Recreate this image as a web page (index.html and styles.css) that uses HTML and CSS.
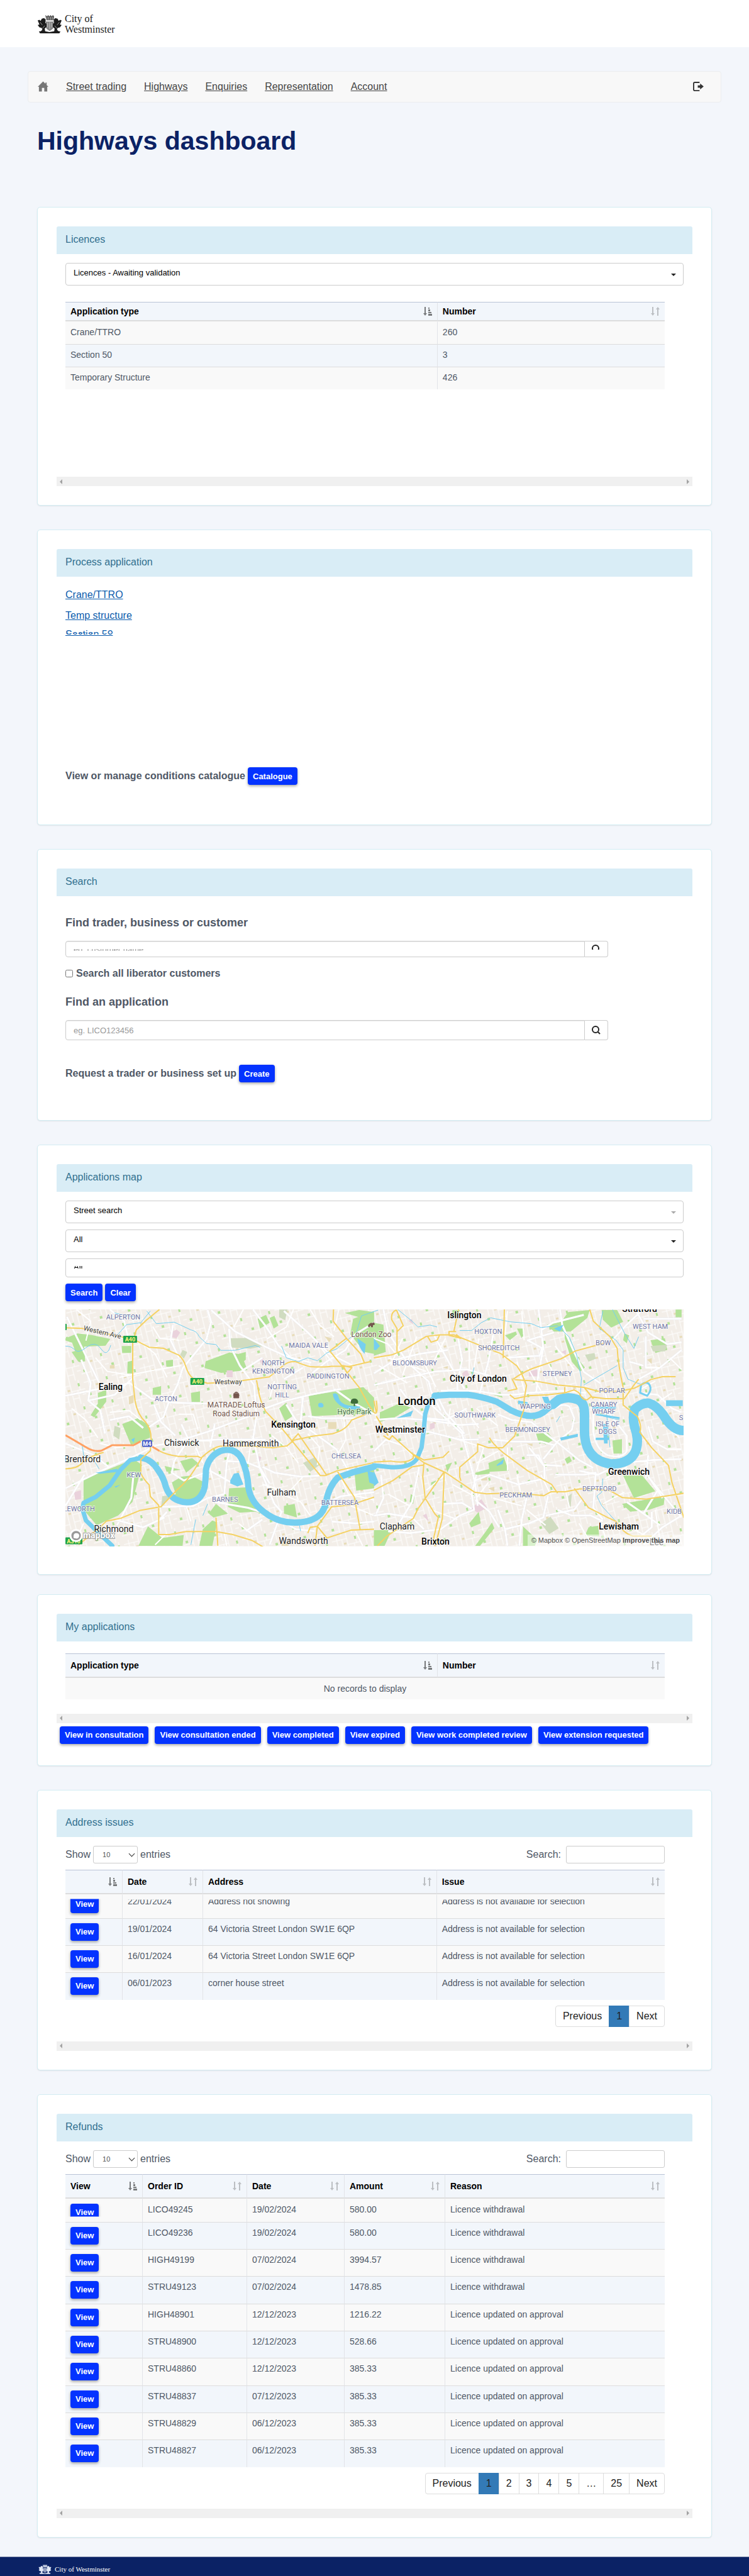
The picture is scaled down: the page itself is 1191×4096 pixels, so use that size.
FILE: index.html
```html
<!DOCTYPE html>
<html lang="en">
<head>
<meta charset="utf-8">
<meta name="viewport" content="width=device-width, initial-scale=1">
<title>Highways dashboard</title>
<link rel="stylesheet" href="styles.css">
</head>
<body>
<svg class="sprite" aria-hidden="true">
  <symbol id="crest" viewBox="0 0 43 32">
    <path d="M14 1l3 2 2-2 2 2 2-2 2 2 2-2 2 2-1 7H16z" opacity=".75"/>
    <path d="M1 10l3-1 2 2 2-4 4-1 3 3-1 5 2 2v5l-3 3 1 6H5l4-4-1-3-4-1-3-4 3-1z"/>
    <path d="M42 10l-3-1-2 2-2-4-4-1-3 3 1 5-2 2v5l3 3-1 6h9l-4-4 1-3 4-1 3-4-3-1z"/>
    <path d="M15 12h13v9c0 3-3 5-6.500 7-3.500-2-6.500-4-6.500-7z" opacity=".55"/>
    <path d="M3 29l8-1 10 2 11-2 8 1-2 3H5z"/>
    <path class="crest-cut" d="M17 4v5M20 4v5M23 4v5M26 4v5M14 10h15M18 14v8M21.500 13v12M25 14v8M5 13l4 5M38 13l-4 5M9 24l4-5M34 24l-4-5"/>
  </symbol>
  <symbol id="home" viewBox="0 0 18 17"><path d="M9 0L0 9h2v8h5v-6h4v6h5V9h2l-3-3V2h-2v2z"/></symbol>
  <symbol id="logout" viewBox="0 0 19 16"><path d="M12 0H4Q1 0 1 3v10q0 3 3 3h8v-2H4q-1 0-1-1V3q0-1 1-1h8zM9 6h4V3l6 5-6 5v-3H9z"/></symbol>
  <symbol id="glass" viewBox="0 0 14 14"><path class="line" d="M9.500 9.500L13 13M6 1a5 5 0 1 0 0 10a5 5 0 1 0 0-10z"/></symbol>
  <symbol id="sorted" viewBox="0 0 14 14"><path d="M2 0h2v10h2l-3 4-3-4h2zM8 1h2v2H8zM8 4h3v3H8zM8 8h5v2H8zM8 11h6v3H8z"/></symbol>
  <symbol id="sortable" viewBox="0 0 14 14"><path d="M2 0h2v10h2l-3 4-3-4h2zM10 14h2V4h2l-3-4-3 4h2z"/></symbol>
</svg>

<header class="site-header">
  <a class="brand" href="#">
    <svg class="brand-crest"><use href="#crest"/></svg>
    <span>City of<br>Westminster</span>
  </a>
</header>

<nav class="navbar" aria-label="Main">
  <a href="#" aria-label="Home"><svg class="icon-home"><use href="#home"/></svg></a>
  <a href="#">Street trading</a>
  <a href="#">Highways</a>
  <a href="#">Enquiries</a>
  <a href="#">Representation</a>
  <a href="#">Account</a>
  <a class="logout" href="#" aria-label="Log out"><svg class="icon-logout"><use href="#logout"/></svg></a>
</nav>

<main>
  <h1>Highways dashboard</h1>

  <section class="card">
    <h2>Licences</h2>
    <div class="pane pane-licences">
      <div class="select-box select-licences">
        <select aria-label="Licence status"><option>Licences - Awaiting validation</option></select>
      </div>
      <table class="data-table head-short">
        <colgroup><col class="w-type"><col></colgroup>
        <thead><tr>
          <th><div>Application type<svg class="on"><use href="#sorted"/></svg></div></th>
          <th><div>Number<svg><use href="#sortable"/></svg></div></th>
        </tr></thead>
        <tbody>
          <tr><td>Crane/TTRO</td><td>260</td></tr>
          <tr><td>Section 50</td><td>3</td></tr>
          <tr><td>Temporary Structure</td><td>426</td></tr>
        </tbody>
      </table>
    </div>
    <div class="scrollbar"></div>
  </section>

  <section class="card card-process">
    <h2>Process application</h2>
    <div class="body">
      <ul class="link-list">
        <li><a href="#">Crane/TTRO</a></li>
        <li><a href="#">Temp structure</a></li>
        <li><a class="cut-link" href="#" data-label="Section 50"><span>Section 50</span></a></li>
      </ul>
      <div class="action-line"><strong>View or manage conditions catalogue</strong> <button type="button" class="btn">Catalogue</button></div>
    </div>
  </section>

  <section class="card card-search">
    <h2>Search</h2>
    <form class="body">
      <label class="title" for="trader">Find trader, business or customer</label>
      <div class="input-group short">
        <input id="trader" type="text" placeholder="eg. customer name">
        <button type="button" aria-label="Find trader"><svg><use href="#glass"/></svg></button>
      </div>
      <label class="check"><input type="checkbox">Search all liberator customers</label>
      <label class="title" for="application">Find an application</label>
      <div class="input-group">
        <input id="application" type="text" placeholder="eg. LICO123456">
        <button type="button" aria-label="Find application"><svg><use href="#glass"/></svg></button>
      </div>
      <div class="action-line"><strong>Request a trader or business set up</strong> <button type="button" class="btn">Create</button></div>
    </form>
  </section>

  <section class="card card-map">
    <h2>Applications map</h2>
    <div class="body">
      <div class="select-stack">
        <div class="select-box faint"><select aria-label="Search type"><option>Street search</option></select></div>
        <div class="select-box"><select aria-label="Street"><option>All</option></select></div>
        <div class="select-box short"><select aria-label="Status"><option>All</option></select></div>
      </div>
      <div class="button-pair"><button type="button" class="btn">Search</button><button type="button" class="btn">Clear</button></div>
      <div class="map">
        <svg class="map-canvas" viewBox="0 0 984 377" role="img" aria-label="Map of London">
          <defs>
            <pattern id="streets" width="46" height="38" patternUnits="userSpaceOnUse" patternTransform="rotate(-14)">
              <path class="tiny" d="M0 6h24M8 0v22M16 6v32M24 0v38M24 16h22M34 16v22M0 30h16M38 0v16M24 28h10M40 24h6"/>
              <path class="grass" d="M4 24h4v4h-4zM36 5h3v5h-3z"/>
              <path class="sand" d="M18 12h4v3h-4z"/>
            </pattern>
          </defs>
          <rect class="land" width="984" height="377"/>
          <rect fill="url(#streets)" width="984" height="377"/>

          <g transform="matrix(.3797 0 0 .3101 -104 -16)">
            <path class="grass" d="M274 200l50-25 60 8 78 20-20 35-90 5 5 75-25 5-30-100-28-12zM862 318l100-45 50 10 25 80-110 15-70-25zM1000 280l30-10v40l-20 20zM512 640l65-30 52 40v60l-80 38zM1293 495l230-45 45 55v80l-260 15zM350 925l210-105 35 30-40 190-60 70-90 50-55-80zM720 940l40-30 40-5 50 30-15 70-40 35-50-10zM960 970l70-5 30 60 65 75-60-10-60 5-50-30zM850 1180l40-45 20 10-20 120h-55zM580 1265l40-100 60 60 90-15-5 55zM875 1100l30-50 50 50-60 20zM1480 100l88-40v220l-40-10-60-90zM1485 880l83-20v110l-75 12zM1445 70l60-15 63 10-40 35zM1080 100l35-20 15 40-40 30zM1130 95l20-10 17 50-20 15zM1170 560l30-30 25 70-30 25zM1190 1060l45-10 10 70-55-20zM755 830l50-15 25 25-50 50zM410 480l35-15v60l-50 80-15-10 30-60zM300 270l30-10 18 50-20 10zM695 315l30-5v40l-28-5zM510 240h40v35h-38zM535 320l20-5v65h-22zM640 455l35-10v45h-35zM800 480l38-8v55h-35zM690 855l8 30 60-10z"/>
            <path class="scrub" d="M965 200l80-2 65 40-60 15-80-5zM1170 52h35l-10 55-25-15zM480 650l25 10-5 60-25-20zM1270 840l50-30 20 40-40 35zM680 1010l40-5-45 65zM765 260l20 10-15 35-15-20z"/>
            <path class="pink" d="M715 170l25-15 15 15-15 30-20-5zM950 365h25v35h-25zM310 990l30-10v45l-25 5zM1085 300l20 5-10 30zM1075 800l20 10-10 35z"/>
            <path class="sand" d="M1375 630h35v35h-35zM460 340l20-5v20h-20zM540 500l20-10v40l-20 10zM1360 190l30 10-10 20zM1180 1250l30-10v25h-30z"/>
            <path class="road" d="M274 495l140-35 130-30 90 80 90 20 130 5h80M460 52l60 60 22 110M725 130l-10 80 35 90M870 55l15 60-20 90-100 150-20 80-40 100-20 70-60 50M960 150l5 90 40 100 60 100 10 160-15 120M885 55l100 110 130 80 90 50 100 30M1190 60l100 110 90 110 100 60M1060 52l50 80 60 110 70 80M1100 300l-90 70M1110 560l90-40 100-30 130-30M274 740l120 60 60 60M274 970l150-90 130-70 100-60 100-20 160-10h200M274 1060l80-160M740 730l130-50 130-60 90-40M1060 700l30 170 60 180 30 40-50 170M1100 860l50 30 110 20 80-5M940 1000l-70 20-60 40-130 5M1568 120l-80 60-40 80-80 60-60 60M1200 540l40 80 70 60 100 90 50 110M560 890l-10 130-60 140M480 1130l120 40 90-50M670 1130l30-40M900 1040l140 30 100 40 100 70 80 10M1340 1060l90-50 138-20M1390 1140l100 10 78-10M820 760l30 80M760 640l30 80-60 110-10 60 50 40 110-50 90 60M340 310l40 120-10 90 50 50 20 120M420 440l-40-100-40-100-60-150M560 400l-80 90-110 30M645 540l30 90 60 70M1400 460l80 70 88 60M1290 600l60 10h150M1030 1190l70-60M950 830l80 5 60 30 40 80M970 740l-20 100-10 160M1270 350l-80 60M1270 500l-10 130-90 50M900 640l-20 120M600 660l-60-60-80 20"/>
            <path class="lane" d="M320 52l60 60-20 100M400 300l50 70 100 20M500 400l160-40 100-20M590 220l60 60 50 120M640 140l30 60 80 10M300 560l60 60 50 90M460 580l80-10 50 50M420 740l70 20 70-10M750 590h60l20 80M870 820l20 100M1050 750l-10 90M1140 700l60 60 50 80M1290 690l50 70-10 90M1440 600l10 120-50 110M1300 52l40 80 60 60M1340 240l50 80M1420 52l-20 110M1230 52l-30 90-80 60M1020 52l-40 90M900 420l30 60M1150 420l-20 90M350 1150l-40 110M700 1200l-50 60M780 1060l20 80M1100 950l110 40 60-80M1180 1000l80 40 40 70M1470 1060l98 50M1230 960l20 70M1430 920l30 80 108 30M1490 1190l30 75M940 1200l10 65M1000 1150l60 60"/>
            <path class="stream" d="M274 240q25 0 40 20t50-15 60 10 40-20M480 200l50-70 60-10 40-60M615 60l40 65 75-8 70 40q25 5 35 35l30 35 40 5 20 30h60l85-25 20 10M1180 240l20 60 50 20 40-20 40 15 40-40 40-20 60-60 20-10 25-100 70-30M345 750l5 50 40 20 25 50M405 1180l60 80M1255 1160l5 30M850 1110l20-60M820 1130l-20 130M480 70l80 20"/>
            <path class="water" d="M1395 485q20-10 25 20t40 40l50 5-5 15q-50 5-80-20-30-30-30-60zM1335 535q15-10 20 5t-10 15-10-20zM965 930l15-35 20-5 20 60-25 10-30-15zM1498 200l35 30-5 50q-25-30-30-80zM1540 880l28 10v60l-20-10zM550 720l15-10-5 25zM480 960l25-8-20 15zM400 890l90-20 10 15-80 10z"/>
            <path class="river narrow" d="M470 1265l-60-70-50-60-15-60 5-30 50-30 60-60 45-80 40-50 45-10"/>
            <path class="river" d="M590 812q45 10 70 60 25 40 35 90 20 75 88 80 60 0 75-80 5-55 5-85 10-70 60-98 60-25 90 40 25 70 28 145 10 85 80 140 60 50 140 40 90-10 105-100 10-80 50-130l60-25 92-30"/>
            <path class="motorway" d="M274 697l90 65q30 22 60 15l45-28h90l30-20M638 756l30 22"/>
            <path class="main" d="M274 146l70 3 170 45 60 20 50 32 60 5 65 35q20 20 30 60t30 60l60 25 110-8 90-15 60-10 60-60q20-20 50-18 40 20 60 25 60 5 90-1h78l88-25M668 52l-55 55-42 50-15 65v190l10 110q10 70 45 110 25 40 22 95l-3 50-40 45v70q10 30 35 60l5 60 35 45v150h45l70-15h125l70 15 80 30 70 50 30 20M274 870q50 0 70-30t90-55M668 778q30 20 80 28h80l15 8q50-55 80-60h130l90 8 60-10 30-30 80-20 80-12q60-20 80-70l61-30M1075 415l8 50q5 50 30 110l70 90 40 60 80 120 40 60h20l50-25 153-42M845 814l-30 60q-30 60-70 100l-70 90-90 20-80 40-60 15-25 30-90 90M905 1120l8 145M1398 52l-2 60 56 88-70 65 60 90 65 100 40 90 21 35M1452 200l60 80 15 45M1415 885l70 130 25 170M1320 1265l10-100 60-100 80-10 98-40M1290 1200l10-30 30-5 40 60 100-40 98-5M1220 730l30-40 90 160 30 55M1435 340l40 10-20 30-15-35z"/>
          </g>

          <g transform="matrix(.3797 0 0 .3101 491 -16)">
            <path class="grass" d="M0 120l40 10 10 140-50 20zM25 580l80-45 50 20-60 45-70 30zM725 130l60-15 30-50 90-10-10 40-70 70h-70zM800 170l25 40 20 80 40 60-20 20-35-50-30-120zM955 55h65l25 60-50 30-35-40zM1045 905l80 0 55 80-90 35zM1040 1050l180-40-5 45-60 25-80 10zM480 840l65-30 20 70-80 5zM425 890l60-20v25l-60 8zM680 690l50-5 25 35-35 25-30-15zM625 1165l60 70-10 30h-50zM900 1170l40-8 5 55-60-5zM400 1150l40-60 8 60-40 20zM0 1185h75l-30 80H0zM550 185l45-20 5 15-30 30zM300 850l28-12-20 50zM155 1000l15 10-5 40-15-10zM1000 725l40-8v75h-35zM600 150h30l-10 50zM1160 210l60-10 10 60-50 15zM1265 52h25v40h-25zM1050 175l20 10-10 40-15-15zM800 820l20-15 10 25-20 15zM240 940l20-10v25l-20 5zM500 490l30-15 10 30zM330 55h30l-10 35h-25zM470 1190l25-45 10 30-60 90h-20z"/>
            <path class="scrub" d="M885 285l40-10 5 30-30 15zM1160 240l70-8-10 35h-50zM700 1150l40-35 35 60-40 30zM815 1010l15-15-5 70-10-10z"/>
            <path class="pink" d="M410 1075l40-50 25 45-40 25zM650 370l35-10v35h-35zM370 380l20-20 10 30-25 10zM235 640l20-10v30l-20 10zM785 270l20-10v25zM205 1110l15-10 10 40zM145 110l15-10 5 30z"/>
            <path class="sand" d="M580 680l15-10 5 25zM450 910h25v20h-25zM480 970l25-8v25zM970 450l20-8v15zM1145 310l20-8v30zM640 740h25v15zM290 350l20-8v15z"/>
            <path class="road" d="M0 380l90-70 100-30 120-20M0 440l140-40 120-30 130-10 150 50M40 52l20 120 80 150 90 100 10 50 40 100M350 180l20 130-20 120v70M250 180l90 200 40 80M280 470h150l100 20h60l60-10 140-10 100 10M110 460l60 100 50 50 80 10 90-60M440 500l40-180 20-140M0 620l100-10 130 10 130 25 80-5M260 480l40 100 80 110M240 540l130 150 40 180 15 80 10 110M520 590l60 30 80 10 60 60 60 55 80 80 60 40M440 720l-80 0-130-40-160 10M500 720l80 10h120l60 20M650 760l60 90 80 5M780 52l10 80 50 140 40 100 70 60M690 52l10 80 10 120-20 130-10 100M545 300l150-10 10-40-60-40 110-40M700 160l50-40 130-40M1000 210l60-80 70-80M1130 100h160M1100 60l50 110 80 60 60-10M1140 190v160h60M1110 480l80 10 60 70 40 20M1290 260l-90 90-90 60M1070 320l60 20M760 560q30-30 60-10l20 60-10 60-60 60-60 90M920 560v120q10 90 60 120 60 20 80-20v-80l-70-110-20-110M1150 800l-10 120M860 880l80 20 100-60 130-15 120-5M1150 650l20 80 60 40h60M760 900l120 0 50-10-10 180 40 60M640 1020l-20 110-10 135M550 1180l100-30 60-30 20-110M520 1080l30 100 10 85M430 900l-20 100 10 80-60 30-80 70-130 20-90-10M190 860l-30 180-60 120M0 1110l60-10 100 20 50 60M30 900l10 120-30 80M425 1030l60 60 40 80M290 1050l80-5 40 30M0 780l50-60 70 30 50 60M640 800l50 0 25 60v60l-110 30-120-50-60 30M770 1080l60 30h80l50 30M1130 870l80 150M1060 1040l140 120M1190 980l-60 120M1150 910l100 150 40 60M1165 1090v80l-60 60M1290 1110l-80 60-80 90M720 1110l120-30 30-50"/>
            <path class="lane" d="M0 200l60 30 40 60M60 300l160 70M20 340l120 90M120 200l-50 140M180 190l-60 200M200 300l60 150M300 200l-50 120M400 200v160M440 200l-20 150M560 60l-10 120M620 60l10 150M600 320l30 150M640 340l60 130M720 300l60 150M760 240l80 120M380 560l60 100M430 560l90 90M320 560l-10 90M300 700l160 60M460 760l-30 120M520 780l-90 60M560 760v120M600 900l20 120M700 900l40 100M300 900l-80 80M330 950l90 60M60 1000l90 60M240 1080l110 50M480 940l-50 80M500 1020l120 40M640 1080l80 80M800 960l20 110M960 1050l90-60M1180 1080l20 160M1240 300l50 60M1180 420l-60 40M1200 520l50-40M1220 640l60 70M1060 860l-90 60M1080 640l30-40M860 1150l50 100M960 1180l20 80M1090 1180l100 70"/>
            <path class="stream" d="M100 52l60 60 25 30 50-10 30 10M360 160l50 0 40-40 40-25 80 20 90 10 40 20 70-10 50 60 30 90 20 120-5 110M960 60l-15 90 70 60 30 50v90l20 60 60 30M1000 52l50 120 40 80 20-60M1020 340l-140 100M780 600l-15 30M960 920l-5 70-20 20 20 50 60 80M990 760l-15-180M930 590l100 30M420 350l-10 50"/>
            <path class="water" d="M0 200l25 40-15 20H0zM95 610l70-40-10 30-60 10zM515 850l30-30-5 25-25 10zM755 150l40-20-15 35zM605 520l40 8v15l-40-5zM705 500h25l15 50-30-20zM780 710l75-20v15l-70 20zM930 710h55v12h-55zM960 640h20v100h-15zM930 585l100 20v10l-100-20zM915 550h100v12H915zM1225 518h70v30h-70zM0 880l20 60-20 20z"/>
            <path class="river-ring" d="M1120 440q25-25 36 0t-10 55l-30-15z"/>
            <path class="river narrow" d="M0 852l60 8q90 10 120-40l20-60 10-100 5-70 15-60q20-35 60-38"/>
            <path class="river" d="M255 495l60-5h80q60 10 120 35l60 45q100 60 150-5l50-50q40-20 80 0 30 15 28 80"/>
            <path class="river wide" d="M750 540l25-25q40-20 80 0 30 15 28 80v80q0 150 110 170 90 0 108-80 10-50-8-110-10-50 0-90 30-35 60-32 30 10 60 60 40 80 82 80"/>
            <path class="main" d="M95 55q-25 10-20 50l22 45v120M95 55l28 80-25 30M0 300l75-15 50-25 95-70 55-8h60l60 30q80 40 135 65l70 65 20 40 20 60-10 70v50l-40 140-50 60h-60l-45-20v40l-75 80 0 50 5 20M355 52l-20 115M345 180l20 20-50-15v-20h30M225 190l15 30 25-10 10-25M547 52l-5 250M0 835l70-5q70 15 95-15v-20l45 30 80-15 25-30M40 700l25 20 12-20 90 100 45 40 90 50 120 100 50 8 120-5 120 15 30-20h60l60-15h60l70 10 50 35 100 8 100-20 80-15M210 840l-5 70 10 110 40 80 15 20-20 110M0 980l80-50 80-70 50-10M295 885l-110 190-20 50-110 90-40 50M295 885l-8 240-30 140M485 710q10 30 60 80l100 90 100 70 25 45M585 410q30-30 80-55l120-50 60-40 120-40M590 412l90 8 90 20 110 12 60 20h90l60-15q50-30 70-45l50-15h55M905 52l15 60 70 80 30 60q5 90 25 200l0 90 60 60q20 50 10 80l50 80 70 90 15 90 50 180M570 490l20 20 60-15 80-5 70-10 40-15 20 15q15 40 35 35l15-15 60 10h80l40-70 20-30M560 470l40-10-20-50M840 970l60 100 80 50 35 20q30 60 70 75h80M0 520l10 60M0 580q20 20 10-60M10 600l50 100M880 450l40 60M800 480v-30"/>
          </g>

          <g class="areas">
            <text x="92" y="16">ALPERTON</text><text x="160" y="146">ACTON</text>
            <text x="331" y="89">NORTH</text><text x="331" y="102">KENSINGTON</text>
            <text x="387" y="61">MAIDA VALE</text><text x="418" y="110">PADDINGTON</text>
            <text x="345" y="127">NOTTING</text><text x="345" y="140">HILL</text>
            <text x="109" y="267">KEW</text><text x="17" y="321">ISLEWORTH</text>
            <text x="447" y="237">CHELSEA</text><text x="254" y="306">BARNES</text><text x="437" y="311">BATTERSEA</text>
            <text x="673" y="39">HOXTON</text><text x="690" y="65">SHOREDITCH</text><text x="556" y="89">BLOOMSBURY</text>
            <text x="783" y="106">STEPNEY</text><text x="856" y="57">BOW</text><text x="931" y="31">WEST HAM</text>
            <text x="652" y="172">SOUTHWARK</text><text x="748" y="158">WAPPING</text><text x="736" y="195">BERMONDSEY</text>
            <text x="870" y="133">POPLAR</text><text x="857" y="155">CANARY</text><text x="857" y="166">WHARF</text>
            <text x="863" y="186">ISLE OF</text><text x="863" y="198">DOGS</text>
            <text x="850" y="289">DEPTFORD</text><text x="717" y="299">PECKHAM</text>
            <text x="969" y="325">KIDB</text><text x="980" y="176">S</text>
          </g>
          <g class="towns">
            <text x="185" y="217">Chiswick</text><text x="295" y="218">Hammersmith</text><text x="27" y="243">Brentford</text>
            <text x="77" y="354">Richmond</text><text x="344" y="296">Fulham</text><text x="379" y="373">Wandsworth</text>
            <text x="528" y="350">Clapham</text><text x="941" y="375">Lee</text>
          </g>
          <g class="towns major">
            <text x="72" y="128">Ealing</text><text x="363" y="188">Kensington</text><text x="635" y="14">Islington</text>
            <text x="657" y="115">City of London</text><text x="533" y="196">Westminster</text><text x="914" y="4">Stratford</text>
            <text x="897" y="263">Greenwich</text><text x="881" y="350">Lewisham</text><text x="589" y="374">Brixton</text>
            <text class="capital" x="559" y="152">London</text>
          </g>
          <g class="places">
            <text x="272" y="156">MATRADE Loftus</text><text x="272" y="170">Road Stadium</text><text x="487" y="44">London Zoo</text>
            <text class="park" x="460" y="167">Hyde Park</text>
            <text class="street" x="58" y="40" transform="rotate(13 58 40)">Western Ave</text>
            <text class="street" x="259" y="119">Westway</text>
          </g>
          <path class="poi" d="M268 134h8v7h-8zM267 137h10M269 133q3-3 6 0M482 27l1-3 3-2h3l2-1 1 3-3 1v3h-2v-2h-3v2z"/>
          <path class="tree" d="M459 154v-4q-5 1-5-3 1-5 6-5t6 5q0 4-5 3v4z"/>
          <g class="badge">
            <rect x="92" y="42" width="22" height="11" rx="1"/><text x="103" y="51">A40</text>
            <rect x="199" y="109" width="22" height="11" rx="1"/><text x="210" y="118">A40</text>
            <rect x="0" y="363" width="27" height="11" rx="1"/><text x="13" y="372">A316</text>
            <rect x="-6" y="23" width="8" height="10" rx="1"/>
          </g>
          <g class="badge motorway-badge"><rect x="122" y="208" width="16" height="11" rx="2"/><text x="130" y="217">M4</text></g>
          <g class="mapbox"><circle cx="17" cy="360" r="9"/><path d="M13 364q-1-8 4-8t5 4-4 5zM17 358v4M15 360h4"/><text x="28" y="364">mapbox</text></g>
        </svg>
        <p class="attribution"><a href="#">© Mapbox</a> <a href="#">© OpenStreetMap</a> <a href="#"><b>Improve this map</b></a></p>
      </div>
    </div>
  </section>

  <section class="card card-mine">
    <h2>My applications</h2>
    <div class="pane pane-mine">
      <table class="data-table">
        <colgroup><col class="w-type"><col></colgroup>
        <thead><tr>
          <th><div>Application type<svg class="on"><use href="#sorted"/></svg></div></th>
          <th><div>Number<svg><use href="#sortable"/></svg></div></th>
        </tr></thead>
        <tbody><tr><td class="empty" colspan="2">No records to display</td></tr></tbody>
      </table>
    </div>
    <div class="scrollbar"></div>
    <div class="button-row">
      <button type="button" class="btn">View in consultation</button>
      <button type="button" class="btn">View consultation ended</button>
      <button type="button" class="btn">View completed</button>
      <button type="button" class="btn">View expired</button>
      <button type="button" class="btn">View work completed review</button>
      <button type="button" class="btn">View extension requested</button>
    </div>
  </section>

  <section class="card">
    <h2>Address issues</h2>
    <div class="pane">
      <div class="table-tools">
        <label>Show <span class="length"><select><option>10</option></select></span> entries</label>
        <label class="filter">Search: <input type="search"></label>
      </div>
      <table class="data-table tall">
        <colgroup><col class="w-view"><col class="w-date"><col class="w-address"><col></colgroup>
        <thead><tr>
          <th aria-label="View"><div><svg class="on"><use href="#sorted"/></svg></div></th>
          <th><div>Date<svg><use href="#sortable"/></svg></div></th>
          <th><div>Address<svg><use href="#sortable"/></svg></div></th>
          <th><div>Issue<svg><use href="#sortable"/></svg></div></th>
        </tr></thead>
        <tbody>
          <tr class="cut-top"><td><button type="button" class="btn">View</button></td><td><div>22/01/2024</div></td><td><div>Address not showing</div></td><td><div>Address is not available for selection</div></td></tr>
          <tr><td><button type="button" class="btn">View</button></td><td>19/01/2024</td><td>64 Victoria Street London SW1E 6QP</td><td>Address is not available for selection</td></tr>
          <tr><td><button type="button" class="btn">View</button></td><td>16/01/2024</td><td>64 Victoria Street London SW1E 6QP</td><td>Address is not available for selection</td></tr>
          <tr><td><button type="button" class="btn">View</button></td><td>06/01/2023</td><td>corner house street</td><td>Address is not available for selection</td></tr>
        </tbody>
      </table>
      <ul class="pagination"><li><a href="#">Previous</a></li><li class="active"><a href="#">1</a></li><li><a href="#">Next</a></li></ul>
    </div>
    <div class="scrollbar"></div>
  </section>

  <section class="card">
    <h2>Refunds</h2>
    <div class="pane">
      <div class="table-tools">
        <label>Show <span class="length"><select><option>10</option></select></span> entries</label>
        <label class="filter">Search: <input type="search"></label>
      </div>
      <table class="data-table tall">
        <colgroup><col class="w-action"><col class="w-order"><col class="w-when"><col class="w-amount"><col></colgroup>
        <thead><tr>
          <th><div>View<svg class="on"><use href="#sorted"/></svg></div></th>
          <th><div>Order ID<svg><use href="#sortable"/></svg></div></th>
          <th><div>Date<svg><use href="#sortable"/></svg></div></th>
          <th><div>Amount<svg><use href="#sortable"/></svg></div></th>
          <th><div>Reason<svg><use href="#sortable"/></svg></div></th>
        </tr></thead>
        <tbody>
          <tr class="cut-bottom"><td><button type="button" class="btn">View</button></td><td>LICO49245</td><td>19/02/2024</td><td>580.00</td><td>Licence withdrawal</td></tr>
          <tr><td><button type="button" class="btn">View</button></td><td>LICO49236</td><td>19/02/2024</td><td>580.00</td><td>Licence withdrawal</td></tr>
          <tr><td><button type="button" class="btn">View</button></td><td>HIGH49199</td><td>07/02/2024</td><td>3994.57</td><td>Licence withdrawal</td></tr>
          <tr><td><button type="button" class="btn">View</button></td><td>STRU49123</td><td>07/02/2024</td><td>1478.85</td><td>Licence withdrawal</td></tr>
          <tr><td><button type="button" class="btn">View</button></td><td>HIGH48901</td><td>12/12/2023</td><td>1216.22</td><td>Licence updated on approval</td></tr>
          <tr><td><button type="button" class="btn">View</button></td><td>STRU48900</td><td>12/12/2023</td><td>528.66</td><td>Licence updated on approval</td></tr>
          <tr><td><button type="button" class="btn">View</button></td><td>STRU48860</td><td>12/12/2023</td><td>385.33</td><td>Licence updated on approval</td></tr>
          <tr><td><button type="button" class="btn">View</button></td><td>STRU48837</td><td>07/12/2023</td><td>385.33</td><td>Licence updated on approval</td></tr>
          <tr><td><button type="button" class="btn">View</button></td><td>STRU48829</td><td>06/12/2023</td><td>385.33</td><td>Licence updated on approval</td></tr>
          <tr><td><button type="button" class="btn">View</button></td><td>STRU48827</td><td>06/12/2023</td><td>385.33</td><td>Licence updated on approval</td></tr>
        </tbody>
      </table>
      <ul class="pagination"><li><a href="#">Previous</a></li><li class="active"><a href="#">1</a></li><li><a href="#">2</a></li><li><a href="#">3</a></li><li><a href="#">4</a></li><li><a href="#">5</a></li><li><a href="#">…</a></li><li><a href="#">25</a></li><li><a href="#">Next</a></li></ul>
    </div>
    <div class="scrollbar"></div>
  </section>
</main>

<footer class="site-footer">
  <svg class="footer-crest"><use href="#crest"/></svg>
  <span>City of Westminster</span>
</footer>
</body>
</html>
```

FILE: styles.css
```css
* { box-sizing: border-box; }
body {
  margin: 0;
  background: #f3f6fb;
  color: #4f5866;
  font: 16px/23px "Liberation Sans", Arial, sans-serif;
}
button, input, select { font-family: inherit; }
ul { list-style: none; margin: 0; padding: 0; }
.sprite { display: none; }
.crest-cut { fill: none; stroke: #fff; stroke-width: 1; opacity: .6; }
.line { fill: none; stroke: currentColor; stroke-width: 2; }

.site-header { display: flex; align-items: center; height: 75px; padding: 0 59px; background: #fff; }
.brand { display: flex; align-items: center; gap: 4px; color: #222; font: 16px/17px "Liberation Serif", serif; text-decoration: none; }
.brand-crest { width: 40px; height: 30px; fill: #1c1c1c; }

.navbar {
  display: flex; align-items: center; gap: 28px;
  height: 50px; margin: 38px 44px 37px; padding: 0 27px 2px 15px;
  background: #f8f8f8; border: 1px solid #ebedf0; border-radius: 4px;
}
.navbar a { color: #444; }
.icon-home { display: block; width: 17px; height: 17px; fill: #777; }
.logout { margin-left: auto; }
.icon-logout { display: block; width: 18px; height: 15px; fill: #333; }

main { padding: 0 59px; }
h1 { margin: 0 0 81px; color: #0b2265; font-size: 41px; line-height: 48px; }

.card {
  margin-bottom: 38px; padding: 30px 30px 30px;
  background: #fff; border: 1px solid #d3edf3; border-radius: 5px;
  box-shadow: 0 1px 2px rgba(0, 0, 0, .08);
}
.card:last-child { margin-bottom: 30px; }
.card h2 {
  margin: 0; padding: 0 14px 2px;
  background: #d9edf6; color: #31708f; border-radius: 3px 3px 0 0;
  font-size: 16px; font-weight: normal; line-height: 42px;
}
.body { padding: 0 14px; }
.pane { padding: 14px 44px 23px 14px; }
.pane-licences { height: 354px; padding-right: 14px; }
.pane-licences .data-table { width: calc(100% - 30px); }
.pane-mine { padding-top: 19px; }

.scrollbar { display: flex; align-items: center; justify-content: space-between; height: 15px; padding: 0 5px; background: #f0f0f0; }
.scrollbar::before, .scrollbar::after { content: ""; border: 4px solid transparent; }
.scrollbar::before { border-left-width: 0; border-right-color: #a3a3a3; }
.scrollbar::after { border-right-width: 0; border-left-color: #a3a3a3; }

.btn {
  height: 28px; padding: 0 8px;
  background: #0433ff; color: #fff; border: 0; border-radius: 4px;
  box-shadow: 0 2px 4px rgba(0, 0, 0, .35);
  font-size: 13px; font-weight: bold; white-space: nowrap;
}

.select-box { position: relative; }
.select-box select {
  appearance: none; display: block; width: 100%; height: 36px; padding: 0 12px 6px;
  background: #fff; color: #000; border: 1px solid #ccc; border-radius: 4px; font-size: 13px;
}
.select-box::after { content: ""; position: absolute; right: 12px; top: 17px; border: 4px solid transparent; border-top-color: #222; border-bottom: 0; }
.select-box.faint::after { border-top-color: #aaa; }
.select-licences { margin-bottom: 26px; }
.select-stack { display: grid; gap: 10px; }
/* Collapsed selector: only a sliver of its value shows. */
.select-box.short select {
  height: 30px; padding-bottom: 4px; color: transparent;
  background: linear-gradient(transparent 11px, #000 11px, #000 15px, transparent 15px) text;
}
.select-box.short::after { display: none; }

.data-table { width: 100%; table-layout: fixed; border-collapse: separate; border-spacing: 0; font-size: 14px; line-height: 18px; }
.w-type { width: 62%; }
.w-view { width: 90px; }
.w-date { width: 128px; }
.w-address { width: 39%; }
.w-action { width: 122px; }
.w-order { width: 166px; }
.w-when { width: 155px; }
.w-amount { width: 160px; }
.data-table th {
  height: 39px; padding: 0 8px; text-align: left; color: #000;
  background: #f2f6fb; border-top: 1px solid #b9c3d6; border-bottom: 2px solid #ddd;
}
.head-short th { height: 31px; }
.data-table th div { display: flex; align-items: center; justify-content: space-between; min-height: 18px; }
.data-table th svg { width: 14px; height: 14px; margin-left: auto; fill: #000; opacity: .22; }
.data-table th svg.on { opacity: .5; }
.data-table td { height: 36px; padding: 7px 8px 0; vertical-align: top; background: #f9f9f9; border-top: 1px solid #ddd; }
.data-table tr:nth-child(even) td { background: #f2f6fb; }
.data-table tr:first-child td { border-top-color: transparent; }
.data-table th + th, .data-table td + td { border-left: 1px solid #e2e4e8; }
.data-table .empty { height: 34px; text-align: center; }
.tall td { height: 43px; }
.tall tr:nth-child(3n + 4) td { height: 44px; }
.data-table .btn { display: block; }
/* Rows scrolled partly out of view. */
.data-table .cut-top td { height: 38px; }
.cut-top div { margin-top: -6px; clip-path: inset(7px 0 0); }
.cut-top .btn { margin-top: -6px; clip-path: inset(6px -5px -6px round 4px); }
.data-table .cut-bottom td { height: 37px; }
.cut-bottom .btn { margin-bottom: -7px; clip-path: inset(0 -5px 7px); }

.link-list { display: grid; gap: 10px; align-content: start; min-height: 286px; padding-top: 17px; margin-bottom: 17px; }
.link-list a { color: #0b5cad; }
.cut-link { display: block; height: 18px; margin-top: -3px; text-decoration: none; }
.cut-link span, .cut-link::after { display: block; width: max-content; height: 23px; text-decoration: underline; }
.cut-link span { clip-path: inset(5px 0 13px); }
.cut-link::after { content: attr(data-label); margin-top: -28px; clip-path: inset(15px 0 3px); }
.action-line { display: flex; align-items: baseline; gap: 4px; }
.card-process { padding-bottom: 63px; }

.card-search { padding-bottom: 60px; }
.card-search .body { display: flex; flex-direction: column; align-items: flex-start; padding-top: 30px; }
.title { margin-bottom: 17px; font-size: 18px; font-weight: bold; line-height: 24px; }
.input-group { display: flex; width: calc(100% - 120px); height: 32px; margin-bottom: 39px; }
.input-group input {
  flex: 1; min-width: 0; padding: 0 12px; background: #fff; font-size: 13px;
  border: 1px solid #ccc; border-radius: 4px 0 0 4px; box-shadow: inset 0 1px 1px rgba(0, 0, 0, .08);
}
.input-group input::placeholder { color: #999; opacity: 1; }
.input-group button { width: 37px; padding: 0 11px; background: #fff; color: #222; border: 1px solid #ccc; border-left: 0; border-radius: 0 4px 4px 0; }
.input-group svg { display: block; width: 14px; height: 14px; }
.input-group.short { height: 26px; margin-bottom: 14px; }
.input-group.short input::placeholder { color: transparent; background: linear-gradient(transparent 7px, #999 7px, #999 10px, transparent 10px) text; }
.input-group.short svg { clip-path: inset(0 0 6px); }
.check { display: flex; align-items: center; gap: 5px; margin-bottom: 22px; font-weight: bold; }
.check input { width: 12px; height: 12px; margin: 0; }

.card-map { margin-bottom: 31px; padding-bottom: 44px; }
.card-map .body { padding-top: 14px; }
.button-pair { display: flex; gap: 4px; margin: 10px 0 13px; }
.map { position: relative; }
.map-canvas { display: block; width: 100%; overflow: hidden; font-family: Roboto, sans-serif; text-anchor: middle; }
.map-canvas path { vector-effect: non-scaling-stroke; }
.land { fill: #f3eee8; }
.grass { fill: #b3e298; }
.scrub { fill: #d0dcc0; }
.pink { fill: #ead2dc; }
.sand { fill: #e8dcb8; }
.tiny { fill: none; stroke: #fff; stroke-width: 1; }
.road, .lane, .stream, .river, .main, .motorway, .river-ring { fill: none; stroke-linejoin: round; }
.road { stroke: #fff; stroke-width: 3; filter: drop-shadow(0 0 1px #c9cbe0); }
.lane { stroke: #fff; stroke-width: 2; }
.stream { stroke: #75cff0; stroke-width: 1; }
.water { fill: #75cff0; }
.river { stroke: #75cff0; stroke-width: 10; stroke-linecap: round; }
.river.narrow { stroke-width: 7; }
.river.wide { stroke-width: 15; }
.river-ring { stroke: #75cff0; stroke-width: 3; }
.main { stroke: #f5d264; stroke-width: 2; }
.motorway { stroke: #ffa062; stroke-width: 3; }
.map-canvas text { paint-order: stroke; stroke: #fff; stroke-opacity: .7; stroke-width: 2; stroke-linejoin: round; }
.areas { fill: #6f76a5; font-size: 11px; }
.towns { fill: #222; font-size: 14px; }
.major { fill: #000; font-weight: 500; }
.capital { font-size: 18px; }
.places { fill: #74564c; font-size: 12px; }
.park { fill: #4c7548; }
.street { fill: #444; font-size: 11px; }
.poi { fill: #74564c; stroke: #74564c; }
.tree { fill: #3d6b3a; }
.badge rect { fill: #1fa34a; }
.badge text { fill: #fff27a; stroke: none; font-size: 9px; font-weight: bold; }
.badge.motorway-badge rect { fill: #4a5fc9; }
.badge.motorway-badge text { fill: #fff; }
.mapbox { fill: #fff; }
.mapbox circle { fill: #999; stroke: #fff; stroke-width: 3; }
.mapbox text { stroke: #777; font-size: 14px; font-weight: bold; text-anchor: start; }
.attribution {
  position: absolute; right: 0; bottom: 0; margin: 0; padding: 0 6px;
  background: rgba(255, 255, 255, .5); font-size: 11px; line-height: 19px;
}
.attribution a { color: #505050; text-decoration: none; }

.card-mine { padding-bottom: 34px; }
.button-row { display: flex; flex-wrap: wrap; gap: 10px; padding: 5px 5px 0; }

.table-tools { display: flex; justify-content: space-between; margin-bottom: 10px; }
.table-tools label { display: flex; align-items: center; gap: 4px; }
.table-tools .filter { gap: 8px; }
.table-tools select, .table-tools input { height: 28px; background: #fff; color: #555; border: 1px solid #ccc; border-radius: 3px; font-size: 11px; }
.length { position: relative; display: block; }
.length select { appearance: none; display: block; width: 71px; padding: 0 14px; }
.length::after { content: ""; position: absolute; right: 6px; top: 9px; width: 6px; height: 6px; border: solid #333; border-width: 0 1px 1px 0; transform: rotate(45deg); }
.table-tools input { width: 157px; }

.pagination { display: flex; justify-content: flex-end; margin-top: 9px; }
.pagination a { display: block; height: 34px; padding: 0 11px; line-height: 32px; color: #222; background: #fff; border: 1px solid #ddd; text-decoration: none; }
.pagination li + li { margin-left: -1px; }
.pagination li:first-child a { border-radius: 4px 0 0 4px; }
.pagination li:last-child a { border-radius: 0 4px 4px 0; }
.pagination .active a { background: #337ab7; border-color: #337ab7; }

.site-footer {
  display: flex; align-items: center; gap: 5px; height: 32px; padding: 8px 61px 0;
  background: #0b2265; color: #fff; border-top: 1px solid #8d97b3;
  font: 11px/16px "Liberation Serif", serif;
}
.footer-crest { width: 21px; height: 16px; fill: #dfe6f5; }
```
